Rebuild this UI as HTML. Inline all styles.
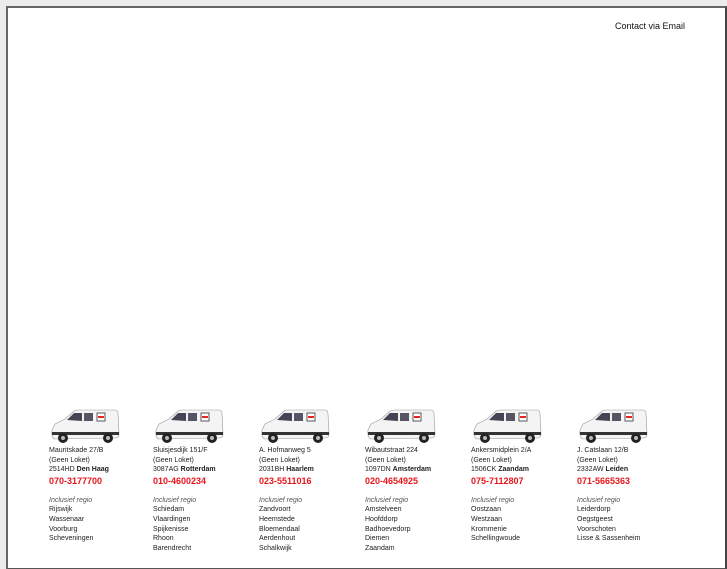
<!DOCTYPE html>
<html><head><style>
body{margin:0;background:#ececec;width:727px;height:545px;overflow:hidden;font-family:"Liberation Sans",sans-serif}
.box{position:absolute;left:6px;top:6px;width:717px;height:560px;background:#fff;border:1px solid #555;border-right:2px solid #444;border-top:2px solid #666;border-left:2px solid #666}
.mail{position:absolute;left:615px;top:21px;font-size:9px;color:#111}
.col{position:absolute;top:408px;width:100px;font-size:7px;color:#222;line-height:9.6px}
.col svg{display:block;margin-bottom:2px}
.ph{color:#e8141b;font-weight:bold;font-size:9px;margin-top:1px;line-height:11px}
.reg{font-style:italic;color:#555;margin-top:9px}
b{font-weight:bold}
</style></head><body>
<div class="box"></div>
<div class="mail">Contact via Email</div>
<svg width="0" height="0" style="position:absolute"><defs><g id="van">
<path d="M3 22 L6 16 L16 11 L24 4 Q26 2 30 2 L66 2 Q69 2 69 6 L70 26 Q70 30 66 30 L6 31 Q2 30 3 22Z" fill="#f4f4f4" stroke="#999" stroke-width=".6"/>
<path d="M18 12 L25 5 L33 5 L33 13Z" fill="#445"/>
<rect x="35" y="5" width="9" height="8" fill="#556"/>
<rect x="48" y="5" width="8" height="8" fill="#fff" stroke="#333" stroke-width=".8"/><rect x="49" y="8" width="6" height="2" fill="#e22"/>
<rect x="3" y="24" width="67" height="3" fill="#333"/>
<circle cx="14" cy="30" r="5" fill="#222"/><circle cx="14" cy="30" r="2" fill="#bbb"/>
<circle cx="59" cy="30" r="5" fill="#222"/><circle cx="59" cy="30" r="2" fill="#bbb"/>
</g></defs></svg>
<div class="col" style="left:49px"><svg width="72" height="36"><use href="#van"/></svg>Mauritskade 27/B<br>(Geen Loket)<br>2514HD <b>Den Haag</b><div class="ph">070-3177700</div><div class="reg">Inclusief regio</div>Rijswijk<br>Wassenaar<br>Voorburg<br>Scheveningen</div>
<div class="col" style="left:153px"><svg width="72" height="36"><use href="#van"/></svg>Sluisjesdijk 151/F<br>(Geen Loket)<br>3087AG <b>Rotterdam</b><div class="ph">010-4600234</div><div class="reg">Inclusief regio</div>Schiedam<br>Vlaardingen<br>Spijkenisse<br>Rhoon<br>Barendrecht</div>
<div class="col" style="left:259px"><svg width="72" height="36"><use href="#van"/></svg>A. Hofmanweg 5<br>(Geen Loket)<br>2031BH <b>Haarlem</b><div class="ph">023-5511016</div><div class="reg">Inclusief regio</div>Zandvoort<br>Heemstede<br>Bloemendaal<br>Aerdenhout<br>Schalkwijk</div>
<div class="col" style="left:365px"><svg width="72" height="36"><use href="#van"/></svg>Wibautstraat 224<br>(Geen Loket)<br>1097DN <b>Amsterdam</b><div class="ph">020-4654925</div><div class="reg">Inclusief regio</div>Amstelveen<br>Hoofddorp<br>Badhoevedorp<br>Diemen<br>Zaandam</div>
<div class="col" style="left:471px"><svg width="72" height="36"><use href="#van"/></svg>Ankersmidplein 2/A<br>(Geen Loket)<br>1506CK <b>Zaandam</b><div class="ph">075-7112807</div><div class="reg">Inclusief regio</div>Oostzaan<br>Westzaan<br>Krommenie<br>Schellingwoude</div>
<div class="col" style="left:577px"><svg width="72" height="36"><use href="#van"/></svg>J. Catslaan 12/B<br>(Geen Loket)<br>2332AW <b>Leiden</b><div class="ph">071-5665363</div><div class="reg">Inclusief regio</div>Leiderdorp<br>Oegstgeest<br>Voorschoten<br>Lisse &amp; Sassenheim</div>
</body></html>
